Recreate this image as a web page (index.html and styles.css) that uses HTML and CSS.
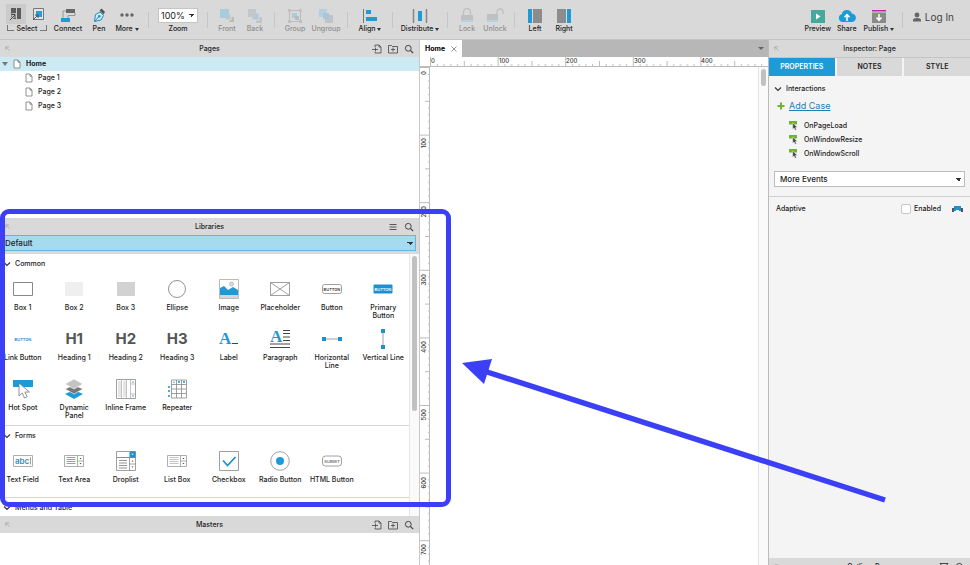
FILE: index.html
```html
<!DOCTYPE html>
<html lang="en">
<head>
    <meta charset="UTF-8">
    <meta name="viewport" content="width=device-width, initial-scale=1.0">
    <title>Home</title>
    <link rel="stylesheet" href="styles.css">
</head>
<body>

<!-- Shared icons -->
<svg class="sprite" aria-hidden="true">
    <symbol id="i-page" viewBox="0 0 8 10"><path d="M1 1h4l2 2.200v5.800h-6z M5 1v2.200h2" fill="#fff" stroke="#777" stroke-width=".8"/></symbol>
    <symbol id="i-dock" viewBox="0 0 6 6"><path d="M1 5V1h4M1 1l4.500 4.500" fill="none" stroke="#aaa"/></symbol>
    <symbol id="i-addpage" viewBox="0 0 10 10"><path d="M3 3V1h4l2 2v6H3V8M7 1v2h2M0 5.500h6M3.500 3.500v4" fill="none" stroke="#555" stroke-width=".9"/></symbol>
    <symbol id="i-addfolder" viewBox="0 0 10 10"><path d="M.5 1.500h3l1 1h5v6.500h-9zM5 3.500v4M3 5.500h4" fill="none" stroke="#555" stroke-width=".9"/></symbol>
    <symbol id="i-search" viewBox="0 0 10 10"><circle cx="4.300" cy="4.300" r="2.900" fill="none" stroke="#444"/><path d="M6.500 6.500L9.200 9.200" stroke="#444" stroke-width="1.200"/></symbol>
    <symbol id="i-menu" viewBox="0 0 10 10"><path d="M1.500 2.500h7M1.500 5h7M1.500 7.500h7" stroke="#555"/></symbol>
    <symbol id="i-chevron" viewBox="0 0 8 6"><path d="M1 1.500l3 3 3-3" fill="none" stroke="#333" stroke-width="1.100"/></symbol>
    <symbol id="i-event" viewBox="0 0 10 10"><path d="M0 0h8v3.500H0z" fill="#6fb52c"/><path d="M3.700 2v6.200l1.400-1.200 1 2.300 1.300-.6-1-2.200 1.900-.2z" fill="#444" stroke="#f4f4f4" stroke-width=".5"/></symbol>
</svg>

<header class="toolbar">
    <button class="tool w44">
        <span class="pair">
            <svg class="boxed" width="20" height="20" viewBox="0 0 20 20"><path d="M5 4h5v11H5zM11 4h4v11h-4z" fill="#5c5c5c"/><path d="M4 16l5-5M5.500 10.500H9V14" stroke="#cbcbcb" stroke-width="2.400" fill="none"/><path d="M4 16l5-5M5.500 10.500H9V14" stroke="#444" fill="none"/></svg>
            <svg width="18" height="20" viewBox="0 0 18 20"><path d="M3.500 4.500h10v11h-10z" fill="#e4e4e4" stroke="#777"/><path d="M6 7h6v6H6z" fill="#2a9bd4"/><path d="M3 16l5-5M5 11h3v3" stroke="#555" fill="none"/></svg>
        </span>
        <span class="select-label">Select</span>
    </button>
    <button class="tool w38"><svg width="18" height="16" viewBox="0 0 18 16"><path d="M7 1h9v4H7z" fill="#666"/><path d="M7 3H4v7M16 5v2.500H9V10" fill="none" stroke="#888" stroke-width=".8"/><path d="M2 10h9v4H2z" fill="#1e9bd7"/></svg><span>Connect</span></button>
    <button class="tool w24"><svg width="14" height="16" viewBox="0 0 14 16"><path d="M2.500 13.500L3.500 6.500 8 4l3.500 3.500L9 12z" fill="#cfe9f5" stroke="#1e8fc4"/><path d="M7.500 2.500l2-2L13 4l-1.500 2.500z" fill="#555"/><path d="M3 13l4-4.500" stroke="#1e8fc4"/><circle cx="7.300" cy="8.300" r="1.200" fill="#1e8fc4"/></svg><span>Pen</span></button>
    <button class="tool w32"><svg width="16" height="16" viewBox="0 0 16 16" fill="#666"><circle cx="3" cy="7" r="1.700"/><circle cx="8" cy="7" r="1.700"/><circle cx="13" cy="7" r="1.700"/></svg><span>More <i class="caret"></i></span></button>
    <span class="sep"></span>
    <div class="tool w48">
        <select id="zoom" class="zoom"><option>100%</option></select>
        <label for="zoom">Zoom</label>
    </div>
    <span class="sep"></span>
    <button class="tool w28" disabled><svg width="16" height="16" viewBox="0 0 16 16"><path d="M10 9h5v5h-5z" fill="#bbb"/><path d="M6 6h6v6H6z" fill="#c6c6c6" stroke="#d9d9d9"/><path d="M1 1h9v9H1z" fill="#a9cbdc"/></svg><span>Front</span></button>
    <button class="tool w28" disabled><svg width="16" height="16" viewBox="0 0 16 16"><path d="M9 9h6v6H9z" fill="#c0c4c7"/><path d="M5 5h7v7H5z" fill="#a9cbdc" stroke="#d9d9d9"/><path d="M1 1h8v8H1z" fill="#c3c7ca"/></svg><span>Back</span></button>
    <span class="sep"></span>
    <button class="tool w30" disabled><svg width="16" height="16" viewBox="0 0 16 16"><path d="M2.500 2.500h11v11h-11z" fill="none" stroke="#bbb"/><path d="M1 1h3v3H1zM12 1h3v3h-3zM1 12h3v3H1zM12 12h3v3h-3z" fill="#c0c0c0"/><path d="M5 5h5v5H5z" fill="#a9cbdc"/><path d="M8 8h4v4H8z" fill="#b5bcc0"/></svg><span>Group</span></button>
    <button class="tool w32" disabled><svg width="16" height="16" viewBox="0 0 16 16"><path d="M1 1h8v8H1z" fill="#b7cfdc"/><path d="M7 7h8v8H7z" fill="#bdc3c7"/><path d="M5 5h6v6H5z" fill="#a9c6d8"/></svg><span>Ungroup</span></button>
    <span class="sep"></span>
    <button class="tool w34"><svg width="16" height="16" viewBox="0 0 16 16"><path d="M1.500 1v14" stroke="#777"/><path d="M4 2h5v4H4zM4 9h11v4H4z" fill="#1e9bd7"/></svg><span>Align <i class="caret"></i></span></button>
    <span class="sep"></span>
    <button class="tool w44"><svg width="16" height="16" viewBox="0 0 16 16"><path d="M1.500 1v14M14.500 1v14" stroke="#888" stroke-width="1.500"/><path d="M6 3h4v10H6z" fill="#1e9bd7"/></svg><span>Distribute <i class="caret"></i></span></button>
    <span class="sep"></span>
    <button class="tool w28" disabled><svg width="16" height="16" viewBox="0 0 16 16"><path d="M4.500 7V4a3.500 3.500 0 017 0v3" fill="none" stroke="#c0c0c0" stroke-width="1.300"/><path d="M2 7h12v5H2z" fill="#c0c0c0"/><path d="M2 12h12v2H2z" fill="#b3d3e2"/></svg><span>Lock</span></button>
    <button class="tool w28" disabled><svg width="18" height="16" viewBox="0 0 18 16"><path d="M11 7V4a3 3 0 016 0v2" fill="none" stroke="#c0c0c0" stroke-width="1.300"/><path d="M1 6h11v6H1z" fill="#c0c0c0"/><path d="M1 12h11v2H1z" fill="#b3d3e2"/></svg><span>Unlock</span></button>
    <span class="sep"></span>
    <button class="tool w30"><svg width="16" height="16" viewBox="0 0 16 16"><path d="M1 1h4v14H1z" fill="#1e9bd7"/><path d="M6 1h9v14H6z" fill="#8c8c8c"/></svg><span>Left</span></button>
    <button class="tool w28"><svg width="16" height="16" viewBox="0 0 16 16"><path d="M11 1h4v14h-4z" fill="#1e9bd7"/><path d="M1 1h9v14H1z" fill="#8c8c8c"/></svg><span>Right</span></button>

    <div class="toolbar-end">
        <button class="tool w30"><svg width="16" height="16" viewBox="0 0 16 16"><path d="M1 2h14v13H1z" fill="#45aa9b"/><path d="M6 5.500l4.500 3-4.500 3z" fill="#fff"/></svg><span>Preview</span></button>
        <button class="tool w28"><svg width="18" height="16" viewBox="0 0 18 16"><path d="M4.500 14a4 4 0 01-.8-7.800 5.300 5.300 0 0110.200-.6A4.200 4.200 0 0113.500 14z" fill="#1e9bd7"/><path d="M9 13V7M6.500 9.200L9 6.500l2.500 2.700" fill="none" stroke="#fff" stroke-width="1.500"/></svg><span>Share</span></button>
        <button class="tool w36"><svg width="16" height="16" viewBox="0 0 16 16"><path d="M1 2h14v1.500H1z" fill="#d21db4"/><path d="M1 4.500h14V15H1z" fill="#8a8a8a"/><path d="M8 6v6M5.500 9.500L8 12.300l2.500-2.800" fill="none" stroke="#fff" stroke-width="1.500"/></svg><span>Publish <i class="caret"></i></span></button>
        <span class="sep"></span>
        <button class="login"><svg width="10" height="10" viewBox="0 0 10 10" fill="#666"><circle cx="5" cy="3" r="2.400"/><path d="M1 9.500V8q0-2 4-2t4 2v1.500z"/></svg>Log In</button>
    </div>
</header>

<main class="workspace">
    <div class="left">
        <section class="panel">
            <div class="panel-head">
                <svg class="dock"><use href="#i-dock"/></svg>
                <h2>Pages</h2>
                <div class="actions">
                    <button aria-label="Add page"><svg><use href="#i-addpage"/></svg></button>
                    <button aria-label="Add folder"><svg><use href="#i-addfolder"/></svg></button>
                    <button aria-label="Search pages"><svg><use href="#i-search"/></svg></button>
                </div>
            </div>
            <ul class="tree">
                <li class="selected"><i class="twisty"></i><svg><use href="#i-page"/></svg>Home</li>
                <li class="child"><svg><use href="#i-page"/></svg>Page 1</li>
                <li class="child"><svg><use href="#i-page"/></svg>Page 2</li>
                <li class="child"><svg><use href="#i-page"/></svg>Page 3</li>
            </ul>
        </section>

        <section class="panel">
            <div class="panel-head">
                <svg class="dock"><use href="#i-dock"/></svg>
                <h2>Libraries</h2>
                <div class="actions">
                    <button aria-label="Library menu"><svg><use href="#i-menu"/></svg></button>
                    <button aria-label="Search libraries"><svg><use href="#i-search"/></svg></button>
                </div>
            </div>
            <div class="library-pick">
                <select aria-label="Library"><option>Default</option></select>
            </div>
            <div class="library">
                <div class="widgets">
                    <h3><svg><use href="#i-chevron"/></svg>Common</h3>
                    <div class="widget-grid">
                        <div class="widget"><svg viewBox="0 0 20 20"><path d="M.5 3.500h19v13H.5z" fill="#fff" stroke="#888"/></svg><span>Box 1</span></div>
                        <div class="widget"><svg viewBox="0 0 20 20"><path d="M1 3h18v14H1z" fill="#efefef"/></svg><span>Box 2</span></div>
                        <div class="widget"><svg viewBox="0 0 20 20"><path d="M1 3h18v14H1z" fill="#d2d2d2"/></svg><span>Box 3</span></div>
                        <div class="widget"><svg viewBox="0 0 20 20"><circle cx="10" cy="10" r="8.500" fill="#fff" stroke="#777" stroke-width=".8"/></svg><span>Ellipse</span></div>
                        <div class="widget"><svg viewBox="0 0 20 20"><path d="M.5.500h19v19H.5z" fill="#fff" stroke="#bbb"/><path d="M1 16h18v3H1z" fill="#d5d5d5"/><path d="M1 9l4-2 4 4 5-3 5 3v5H1z" fill="#1e9bd7"/><circle cx="12.500" cy="5" r="2" fill="#ddd" stroke="#aaa" stroke-width=".7"/></svg><span>Image</span></div>
                        <div class="widget"><svg viewBox="0 0 20 20"><path d="M.5 3.500h19v13H.5zM.5 3.500l19 13M19.500 3.500l-19 13" fill="none" stroke="#888" stroke-width=".8"/></svg><span>Placeholder</span></div>
                        <div class="widget"><svg viewBox="0 0 20 20"><rect x=".5" y="5.500" width="19" height="9" rx="2" fill="#fff" stroke="#888" stroke-width=".8"/><text x="10" y="11.500" class="tiny" fill="#333">BUTTON</text></svg><span>Button</span></div>
                        <div class="widget"><svg viewBox="0 0 20 20"><rect x=".5" y="5.500" width="19" height="9" rx="1" fill="#1e8fd0"/><text x="10" y="11.500" class="tiny" fill="#fff">BUTTON</text></svg><span>Primary Button</span></div>

                        <div class="widget"><svg viewBox="0 0 20 20"><text x="10" y="11.500" class="tiny" fill="#1e7fb8">BUTTON</text></svg><span>Link Button</span></div>
                        <div class="widget"><b class="glyph">H1</b><span>Heading 1</span></div>
                        <div class="widget"><b class="glyph">H2</b><span>Heading 2</span></div>
                        <div class="widget"><b class="glyph">H3</b><span>Heading 3</span></div>
                        <div class="widget"><svg viewBox="0 0 20 20"><text x="0" y="15" class="serif">A</text><path d="M13 14.500h6" stroke="#444"/></svg><span>Label</span></div>
                        <div class="widget"><svg viewBox="0 0 20 20"><text x="0" y="13" class="serif">A</text><path d="M13 1.500h7M13 4.500h7M13 8h7M13 11.500h7M0 15h20M0 18.500h20" stroke="#444"/></svg><span>Paragraph</span></div>
                        <div class="widget"><svg viewBox="0 0 20 20"><path d="M2 10h16" stroke="#888" stroke-width=".8"/><path d="M0 8h4v4H0zM16 8h4v4h-4z" fill="#1e8fd0"/></svg><span>Horizontal Line</span></div>
                        <div class="widget"><svg viewBox="0 0 20 20"><path d="M10 2v16" stroke="#888" stroke-width=".8"/><path d="M8 0h4v4H8zM8 16h4v4H8z" fill="#1e8fd0"/></svg><span>Vertical Line</span></div>

                        <div class="widget"><svg viewBox="0 0 20 20"><path d="M0 1h20v7H0z" fill="#1e9bd7"/><path d="M6 4v13l3.200-3 2.300 5 2.700-1.300-2.300-4.700h4.500z" fill="#fff" stroke="#777" stroke-width=".8"/></svg><span>Hot Spot</span></div>
                        <div class="widget"><svg viewBox="0 0 20 20"><path d="M1 15l9-4 9 4-9 5z" fill="#1e9bd7"/><path d="M1 10l9-4 9 4-9 5z" fill="#777" stroke="#fff" stroke-width=".6"/><path d="M1 5l9-5 9 5-9 5z" fill="#c4c4c4" stroke="#fff" stroke-width=".6"/></svg><span>Dynamic Panel</span></div>
                        <div class="widget"><svg viewBox="0 0 20 20"><path d="M.5.500h19v19H.5z" fill="#fff" stroke="#888" stroke-width=".8"/><path d="M2 2h3v16H2zM7 2h3v16H7z" fill="#e5e5e5"/><path d="M5.500 1v18M10.500 1v18M14.500 1v18M14.500 5h5M14.500 15h5" stroke="#aaa" stroke-width=".7"/><path d="M16 3.500l1-1.500 1 1.500zM16 16.500l1 1.500 1-1.500z" fill="#1e8fd0"/></svg><span>Inline Frame</span></div>
                        <div class="widget"><svg viewBox="0 0 20 20"><path d="M4.500 1h15v18h-15zM4.500 5.500h15M4.500 10h15M4.500 14.500h15M9.500 1v18M14.500 1v18" fill="none" stroke="#888" stroke-width=".8"/><path d="M6 4l1-2 1 2zM11 2h2v2h-2zM16 2h2v2h-2zM1 7h2v2H1zM1 11h2v2H1zM1 16h2v2H1z" fill="#4aaede"/></svg><span>Repeater</span></div>
                    </div>
                    <h3 class="ruled"><svg><use href="#i-chevron"/></svg>Forms</h3>
                    <div class="widget-grid">
                        <div class="widget"><svg viewBox="0 0 20 20"><path d="M.5 4.500h19v11H.5z" fill="#fff" stroke="#999" stroke-width=".8"/><text x="9" y="12.500" class="abc">abc</text><path d="M17.500 6.500v7" stroke="#777" stroke-width=".7"/></svg><span>Text Field</span></div>
                        <div class="widget"><svg viewBox="0 0 20 20"><path d="M.5 4.500h19v11H.5zM13.500 4.500v11M13.500 10h6" fill="#fff" stroke="#999" stroke-width=".8"/><path d="M2.500 6.500h9M2.500 8.500h9M2.500 10.500h9M2.500 12.500h9" stroke="#5db3e0"/><path d="M15.500 8l1-1.200 1 1.200zM15.500 12l1 1.200 1-1.200z" fill="#444"/></svg><span>Text Area</span></div>
                        <div class="widget"><svg viewBox="0 0 20 20"><path d="M.5.500h19v6H.5zM.5 6.500h19v13H.5zM13.500 6.500v13M13.500 13h6" fill="#fff" stroke="#888" stroke-width=".8"/><path d="M13.500.5h6v6h-6z" fill="#1e8fd0"/><path d="M15.300 2.700h2.400l-1.200 1.600z" fill="#fff"/><path d="M3 9.500h8M3 12h8M3 14.500h8M3 17h8" stroke="#777" stroke-width=".8"/><path d="M15.500 10.500l1-1.300 1 1.300zM15.500 15.500l1 1.300 1-1.300z" fill="#444"/></svg><span>Droplist</span></div>
                        <div class="widget"><svg viewBox="0 0 20 20"><path d="M.5 4.500h19v11H.5zM13.500 4.500v11M13.500 10h6" fill="#fff" stroke="#999" stroke-width=".8"/><path d="M2.500 6.500h9M2.500 8.500h9M2.500 10.500h9M2.500 12.500h9" stroke="#aaa" stroke-width=".7"/><path d="M15.500 8l1-1.200 1 1.200zM15.500 12l1 1.200 1-1.200z" fill="#444"/></svg><span>List Box</span></div>
                        <div class="widget"><svg viewBox="0 0 20 20"><path d="M.5.500h19v19H.5z" fill="#fff" stroke="#888" stroke-width=".8"/><path d="M4 9.500l4.500 5L16.500 6" fill="none" stroke="#1e8fd0" stroke-width="1.800"/></svg><span>Checkbox</span></div>
                        <div class="widget"><svg viewBox="0 0 20 20"><circle cx="10" cy="10" r="9.300" fill="#fff" stroke="#888" stroke-width=".8"/><circle cx="10" cy="10" r="4" fill="#1e9bd7"/></svg><span>Radio Button</span></div>
                        <div class="widget"><svg viewBox="0 0 20 20"><rect x=".5" y="5" width="19" height="10" rx="3" fill="#fff" stroke="#888" stroke-width=".8"/><text x="10" y="11.500" class="tiny" fill="#777">SUBMIT</text></svg><span>HTML Button</span></div>
                    </div>
                    <h3 class="ruled"><svg><use href="#i-chevron"/></svg>Menus and Table</h3>
                </div>
                <div class="scrollbar"><i class="thumb long"></i></div>
            </div>
        </section>

        <section class="panel">
            <div class="panel-head">
                <svg class="dock"><use href="#i-dock"/></svg>
                <h2>Masters</h2>
                <div class="actions">
                    <button aria-label="Add master"><svg><use href="#i-addpage"/></svg></button>
                    <button aria-label="Add master folder"><svg><use href="#i-addfolder"/></svg></button>
                    <button aria-label="Search masters"><svg><use href="#i-search"/></svg></button>
                </div>
            </div>
        </section>
    </div>

    <section class="canvas">
        <div class="tabs">
            <div class="tab">Home <button aria-label="Close tab"><svg width="6" height="6" viewBox="0 0 6 6"><path d="M.5.500l5 5M5.500.500l-5 5" stroke="#777" stroke-width=".8"/></svg></button></div>
            <i class="tabs-caret"></i>
        </div>
        <svg class="ruler-x">
            <defs>
                <pattern id="ticks-x" x="10" width="67.600" height="10" patternUnits="userSpaceOnUse">
                    <path d="M.5 0v10M34.300 4v6M7.300 7v3M14 7v3M20.800 7v3M27.500 7v3M41 7v3M47.800 7v3M54.600 7v3M61.300 7v3" stroke="#aaa" stroke-width=".8"/>
                </pattern>
            </defs>
            <rect x="10" width="100%" height="10" fill="url(#ticks-x)"/>
            <text x="11" y="6">0</text><text x="79" y="6">100</text><text x="146" y="6">200</text><text x="214" y="6">300</text><text x="281" y="6">400</text>
        </svg>
        <div class="stage">
            <svg class="ruler-y">
                <defs>
                    <pattern id="ticks-y" width="11" height="67.600" patternUnits="userSpaceOnUse">
                        <path d="M0 .5h11M5 34.300h6M8 7.300h3M8 14h3M8 20.800h3M8 27.500h3M8 41h3M8 47.800h3M8 54.600h3M8 61.300h3" stroke="#aaa" stroke-width=".8"/>
                    </pattern>
                </defs>
                <rect width="10" height="100%" fill="url(#ticks-y)"/>
                <g text-anchor="end">
                    <text transform="translate(6 4) rotate(-90)">0</text>
                    <text transform="translate(6 71) rotate(-90)">100</text>
                    <text transform="translate(6 139) rotate(-90)">200</text>
                    <text transform="translate(6 207) rotate(-90)">300</text>
                    <text transform="translate(6 274) rotate(-90)">400</text>
                    <text transform="translate(6 342) rotate(-90)">500</text>
                    <text transform="translate(6 410) rotate(-90)">600</text>
                    <text transform="translate(6 477) rotate(-90)">700</text>
                </g>
            </svg>
            <div class="sheet"></div>
            <div class="scrollbar"><i class="thumb"></i></div>
        </div>
    </section>

    <aside class="inspector">
        <div class="panel-head">
            <svg class="dock"><use href="#i-dock"/></svg>
            <h2>Inspector: Page</h2>
        </div>
        <nav class="inspector-tabs">
            <button class="active">PROPERTIES</button>
            <button>NOTES</button>
            <button>STYLE</button>
        </nav>
        <div class="interactions">
            <h3><svg><use href="#i-chevron"/></svg>Interactions</h3>
            <div class="add-case"><svg width="8" height="8" viewBox="0 0 8 8"><path d="M4 .5v7M.5 4h7" stroke="#6fb52c" stroke-width="2"/></svg><a href="#">Add Case</a></div>
            <ul class="events">
                <li><svg><use href="#i-event"/></svg>OnPageLoad</li>
                <li><svg><use href="#i-event"/></svg>OnWindowResize</li>
                <li><svg><use href="#i-event"/></svg>OnWindowScroll</li>
            </ul>
            <select class="more-events" aria-label="More Events"><option>More Events</option></select>
        </div>
        <div class="adaptive">
            <span>Adaptive</span>
            <input type="checkbox" id="enabled">
            <label for="enabled">Enabled</label>
            <svg width="11" height="8" viewBox="0 0 11 8"><path d="M2 1h7v5H2z" fill="#1e8fd0"/><path d="M0 3h2v4H0zM9 3h2v4H9z" fill="#555"/><path d="M4 5h3v3H4z" fill="#f4f4f4"/></svg>
        </div>
        <div class="panel-head outline">
            <svg class="dock"><use href="#i-dock"/></svg>
            <h2>Outline: Page</h2>
            <div class="actions">
                <button aria-label="Filter"><svg viewBox="0 0 10 10"><path d="M1 1.500h8L6 5.500V9L4 8V5.500z" fill="none" stroke="#444"/></svg></button>
                <button aria-label="Search outline"><svg><use href="#i-search"/></svg></button>
            </div>
        </div>
    </aside>
</main>

<!-- Callout frame and arrow over the Libraries panel -->
<div class="callout"></div>
<svg class="arrow" width="424" height="140" viewBox="0 0 424 140">
    <path d="M22 8L423 137" stroke="#3b3ff5" stroke-width="5.500"/>
    <path d="M0 0L30-4 22 21z" fill="#3b3ff5"/>
</svg>

</body>
</html>
```
FILE: styles.css
```css
* {
    box-sizing: border-box;
}
body {
    margin: 0;
    height: 100vh;
    display: flex;
    flex-direction: column;
    overflow: hidden;
    position: relative;
    background: #fff;
    color: #222;
    font-family: Inter, "Liberation Sans", sans-serif;
    font-size: 7px;
    font-weight: 500;
    line-height: 8px;
}
button, select, input {
    font: inherit;
    color: inherit;
    margin: 0;
    padding: 0;
    border: 0;
    background: none;
}
h2, h3, ul {
    margin: 0;
    padding: 0;
    font-size: inherit;
    font-weight: 500;
    list-style: none;
}
svg {
    display: block;
    flex: none;
}
.sprite {
    position: absolute;
    width: 0;
    height: 0;
}

/* Toolbar */
.toolbar {
    display: flex;
    align-items: center;
    flex: none;
    height: 40px;
    padding: 1px 16px 0 5px;
    background: #d9d9d9;
    border-bottom: 1px solid #c4c4c4;
}
.tool {
    display: flex;
    flex-direction: column;
    align-items: center;
    justify-content: flex-end;
    height: 26px;
    flex: none;
    white-space: nowrap;
    gap: 1px;
}
.tool:disabled {
    color: #8f8f8f;
}
.w24 { width: 24px; }
.w28 { width: 28px; }
.w30 { width: 30px; }
.w32 { width: 32px; }
.w34 { width: 34px; }
.w36 { width: 36px; }
.w38 { width: 38px; }
.w44 { width: 44px; }
.w48 { width: 48px; }
.pair {
    display: flex;
    gap: 4px;
}
.boxed {
    background: #cbcbcb;
}
.select-label {
    display: flex;
    gap: 3px;
}
.select-label::before, .select-label::after {
    content: "";
    width: 6px;
    height: 5px;
    border: solid #777;
    border-width: 0 0 1px 1px;
}
.select-label::after {
    border-width: 0 1px 1px 0;
}
.caret, .twisty, .tabs-caret {
    display: inline-block;
    border: 2px solid transparent;
    border-top: 3px solid #333;
    border-bottom: 0;
    vertical-align: middle;
}
.sep {
    width: 1px;
    height: 16px;
    margin: 0 5px;
    background: #c6c6c6;
    flex: none;
}
/* Drop-down arrow is two small triangles side by side */
select {
    appearance: none;
    background-color: #fff;
    background-image: linear-gradient(to top right, transparent 50%, #333 50%), linear-gradient(to top left, transparent 50%, #333 50%);
    background-repeat: no-repeat;
    background-size: 3px 3px;
    background-position: right 5px center, right 2px center;
}
.zoom {
    width: 40px;
    height: 15px;
    margin-bottom: 1px;
    padding-left: 2px;
    border: 1px solid #c4c4c4;
    font-size: 9px;
    font-weight: 400;
}
.toolbar-end {
    display: flex;
    align-items: center;
    margin-left: auto;
}
.login {
    display: flex;
    align-items: center;
    gap: 3px;
    margin-bottom: 6px;
    padding-left: 4px;
    font-size: 10px;
    font-weight: 400;
    color: #444;
    white-space: nowrap;
}

/* Panels */
.workspace {
    display: grid;
    grid-template-columns: 419px minmax(0, 1fr) 202px;
    flex: 1;
    min-height: 0;
}
.left {
    display: grid;
    grid-template-rows: minmax(0, 178fr) minmax(0, 298fr) minmax(0, 49fr);
    min-height: 0;
}
.panel {
    display: flex;
    flex-direction: column;
    min-height: 0;
}
.panel-head {
    display: grid;
    grid-template-columns: 1fr auto 1fr;
    align-items: center;
    flex: none;
    height: 17px;
    padding: 0 5px;
    background: #d9d9d9;
}
.panel-head h2 {
    grid-column: 2;
}
.dock {
    width: 5px;
    height: 5px;
}
.actions {
    display: flex;
    justify-content: flex-end;
    gap: 6px;
}
.actions svg {
    width: 10px;
    height: 10px;
}
.tree li {
    display: flex;
    align-items: center;
    gap: 5px;
    height: 14px;
    padding-left: 2px;
}
.tree svg {
    width: 8px;
    height: 10px;
}
.tree .selected {
    background: #cbeaf4;
    font-weight: 700;
}
.tree .child {
    padding-left: 25px;
}
.twisty {
    border-width: 4px 3px 0;
    border-top-color: #777;
}

/* Libraries */
.library-pick {
    flex: none;
    padding: 0 3px 3px 0;
    background: #d9d9d9;
}
.library-pick select {
    display: block;
    width: 100%;
    height: 16px;
    padding-left: 4px;
    border: 1px solid #69b4d6;
    background-color: #a6daf0;
    font-size: 8px;
}
.library {
    display: flex;
    flex: 1;
    min-height: 0;
}
.widgets {
    flex: 1;
    overflow: hidden;
}
.scrollbar {
    width: 10px;
    padding: 2px;
    border-left: 1px solid #e6e6e6;
    background: #fafafa;
}
.thumb {
    display: block;
    width: 5px;
    height: 17px;
    border-radius: 3px;
    background: #c1c1c1;
}
.thumb.long {
    height: 60%;
}
h3 {
    display: flex;
    align-items: center;
    gap: 4px;
    height: 20px;
    padding-left: 3px;
}
h3 svg {
    width: 8px;
    height: 6px;
}
.ruled {
    height: 21px;
    border-top: 1px solid #d5d5d5;
}
.widget-grid {
    display: grid;
    grid-template-columns: repeat(8, 1fr);
    grid-auto-rows: 50px;
    margin: 1px 0 0 -3px;
}
.widget {
    text-align: center;
    min-width: 0;
}
.widget svg {
    width: 20px;
    height: 20px;
    margin: 4px auto 5px;
    overflow: visible;
}
.widget span {
    display: block;
    margin: 0 2px;
}
.glyph {
    display: block;
    padding: 4px 0 5px;
    font-size: 15px;
    line-height: 20px;
    color: #555;
}
.tiny {
    font-size: 4px;
    font-weight: 600;
    text-anchor: middle;
}
.serif {
    font-family: "Liberation Serif", serif;
    font-size: 17px;
    font-weight: 700;
    fill: #1e9bd7;
}
.abc {
    font-size: 8px;
    font-weight: 600;
    text-anchor: middle;
    fill: #1e8fd0;
}

/* Canvas */
.canvas {
    display: flex;
    flex-direction: column;
    min-height: 0;
    border-left: 1px solid #c8c8c8;
}
.tabs {
    display: flex;
    align-items: center;
    justify-content: space-between;
    height: 17px;
    padding-right: 4px;
    background: #b7b7b7;
}
.tab {
    display: flex;
    align-items: center;
    gap: 6px;
    height: 17px;
    padding: 0 5px;
    background: #fff;
    color: #000;
    font-weight: 700;
}
.tabs-caret {
    border-width: 3px 3px 0;
    border-top-color: #666;
}
.ruler-x {
    width: 100%;
    height: 10px;
    border-bottom: 1px solid #bbb;
}
.ruler-x text, .ruler-y text {
    font-size: 6px;
    fill: #333;
}
.stage {
    display: flex;
    flex: 1;
    min-height: 0;
}
.ruler-y {
    width: 10px;
    height: 100%;
    border-right: 1px solid #bbb;
}
.sheet {
    flex: 1;
}

/* Inspector */
.inspector {
    display: flex;
    flex-direction: column;
    min-height: 0;
    border-left: 1px solid #bbb;
    background: #f4f4f4;
}
.inspector-tabs {
    display: grid;
    grid-template-columns: repeat(3, 1fr);
    gap: 2px;
    border-top: 1px solid #c4c4c4;
}
.inspector-tabs button {
    height: 18px;
    background: #d9d9d9;
    font-weight: 600;
}
.inspector-tabs .active {
    background: #1e9bd7;
    color: #fff;
}
.interactions {
    padding: 4px 5px 9px;
    border-bottom: 1px solid #d0d0d0;
}
.interactions h3 {
    height: 18px;
    padding-left: 0;
}
.add-case {
    display: flex;
    align-items: center;
    gap: 4px;
    height: 16px;
    padding-left: 3px;
    font-size: 9px;
    font-weight: 400;
}
.add-case a {
    color: #1e7fb0;
}
.events {
    padding: 5px 0 10px 15px;
}
.events li {
    display: flex;
    align-items: center;
    gap: 5px;
    height: 14px;
}
.events svg {
    width: 10px;
    height: 10px;
}
.more-events {
    display: block;
    width: 100%;
    height: 16px;
    padding-left: 5px;
    border: 1px solid #bcbcbc;
    font-size: 8px;
}
.adaptive {
    display: flex;
    align-items: center;
    gap: 3px;
    padding: 7px;
}
.adaptive span {
    flex: 1;
}
.adaptive input {
    appearance: none;
    width: 10px;
    height: 10px;
    border: 1px solid #c8c8c8;
    border-radius: 2px;
    background: #fff;
}
.adaptive svg {
    margin-left: 8px;
}
.outline {
    height: 17px;
    margin-top: auto;
    margin-bottom: -10px;
}

/* Callout */
.callout {
    position: absolute;
    left: 0;
    top: 209px;
    width: 451px;
    height: 298px;
    border: 5px solid #3b3ff5;
    border-radius: 9px;
}
.arrow {
    position: absolute;
    left: 462px;
    top: 363px;
    overflow: visible;
}
```
